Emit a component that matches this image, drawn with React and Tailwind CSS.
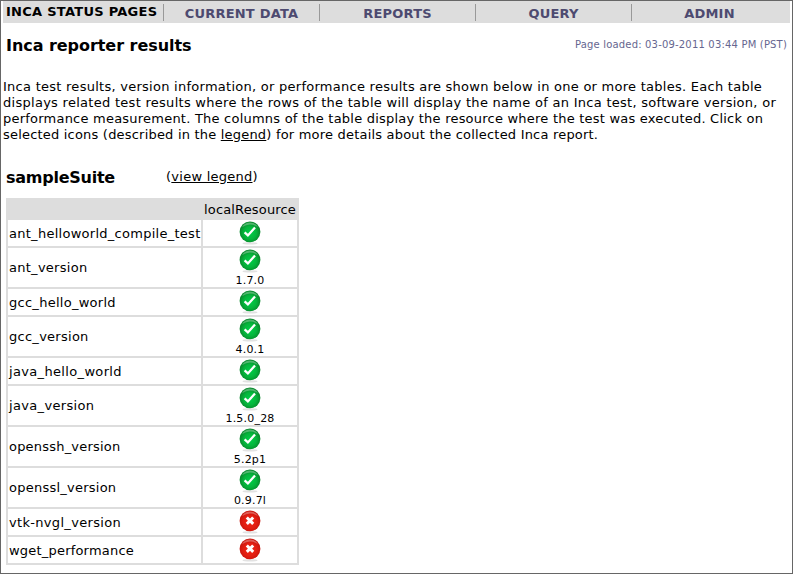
const rows = [
  { name: 'ant_helloworld_compile_test', ok: true, tracking: 'tracking-[0.27px]' },
  { name: 'ant_version', ok: true, version: '1.7.0', tracking: 'tracking-[0.27px]' },
  { name: 'gcc_hello_world', ok: true, tracking: 'tracking-[0.27px]' },
  { name: 'gcc_version', ok: true, version: '4.0.1', tracking: 'tracking-[0.27px]' },
  { name: 'java_hello_world', ok: true, tracking: 'tracking-[0.34px]' },
  { name: 'java_version', ok: true, version: '1.5.0_28', tracking: 'tracking-[0.33px]' },
  { name: 'openssh_version', ok: true, version: '5.2p1', tracking: 'tracking-[0.2px]' },
  { name: 'openssl_version', ok: true, version: '0.9.7l', tracking: 'tracking-[0.24px]' },
  { name: 'vtk-nvgl_version', ok: false, tracking: 'tracking-[0.32px]' },
  { name: 'wget_performance', ok: false, tracking: 'tracking-[0.2px]' },
];

function StatusIcon({ ok }) {
  const id = ok ? 'pass' : 'fail';
  return (
    <svg width="22" height="25" viewBox="0 0 22 25" className="block shrink-0">
      <defs>
        <radialGradient id={id} cx="0.5" cy="0.55" r="0.5">
          <stop offset="0" stopColor={ok ? '#00cf48' : '#ee2516'} />
          <stop offset="0.6" stopColor={ok ? '#05b53c' : '#e41f12'} />
          <stop offset="1" stopColor={ok ? '#078a2c' : '#c9160d'} />
        </radialGradient>
      </defs>
      <ellipse cx="11" cy="23.4" rx="7.5" ry="1.1" fill="#e2e2e2" />
      <circle cx="11" cy="11.8" r="10.4" fill={`url(#${id})`} />
      <path d="M3 7.2A9.2 9.2 0 0 1 19 7.2Q11 2 3 7.2Z" fill="#fff" opacity="0.3" />
      {ok ? (
        <path d="M5.6 12.4L8.9 15.4L16 7.6" fill="none" stroke="#fff" strokeWidth="2.3" />
      ) : (
        <path d="M7.8 8.5L14.2 14.9M14.2 8.5L7.8 14.9" fill="none" stroke="#fff" strokeWidth="3" />
      )}
    </svg>
  );
}

function NavItem({ children }) {
  return (
    <div className="flex h-[17px] w-[156px] justify-center border-l border-[#999] pt-[1px] text-[13px] leading-[17px] font-bold tracking-[0.2px] text-[#4d4a70]">
      {children}
    </div>
  );
}

export default function App() {
  return (
    <div className="h-[574px] w-[793px] overflow-hidden border border-[#666] bg-white font-['Verdana','DejaVu_Sans',sans-serif] text-[13px] whitespace-nowrap text-black">
      <nav className="ml-[2px] flex h-[22px] w-[787px] bg-[#ddd] pt-[3px]">
        <div className="w-[160px] pl-[3px] text-[13px] leading-[15px] font-bold tracking-[0.27px]">INCA STATUS PAGES</div>
        <NavItem>CURRENT DATA</NavItem>
        <NavItem>REPORTS</NavItem>
        <NavItem>QUERY</NavItem>
        <NavItem>ADMIN</NavItem>
      </nav>
      <header className="flex h-[44px] justify-between pr-[5px] pl-[5px]">
        <h1 className="pt-[13px] text-[16px] leading-[20px] font-bold tracking-[-0.05px]">Inca reporter results</h1>
        <div className="pt-[14px] text-[10px] leading-[16px] tracking-[0.18px] text-[#666690]">Page loaded: 03-09-2011 03:44 PM (PST)</div>
      </header>
      <p className="mt-[12px] ml-[2px] leading-[16px]">
        <span className="block tracking-[0.263px]">Inca test results, version information, or performance results are shown below in one or more tables. Each table</span>
        <span className="block tracking-[0.28px]">displays related test results where the rows of the table will display the name of an Inca test, software version, or</span>
        <span className="block tracking-[0.222px]">performance measurement. The columns of the table display the resource where the test was executed. Click on</span>
        <span className="block tracking-[0.2px]">selected icons (described in the <a className="underline">legend</a>) for more details about the collected Inca report.</span>
      </p>
      <div className="mt-[25px] flex h-[30px] pl-[5px]">
        <h2 className="w-[160px] text-[16px] leading-[20px] font-bold tracking-[-0.25px]">sampleSuite</h2>
        <div className="leading-[18px] tracking-[0.25px]">(<a className="underline">view legend</a>)</div>
      </div>
      <div className="ml-[5px] grid w-[293px] grid-cols-[193px_94px] gap-x-[2px] gap-y-[2px] bg-[#ddd] px-[2px] pb-[2px]">
        <div className="h-[20px]" />
        <div className="flex h-[20px] justify-center pt-[3px] leading-[17px] tracking-[0.15px]">localResource</div>
        {rows.map((r) => (
          <div key={r.name} className="contents">
            <div className={`bg-white pl-px leading-[17px] ${r.tracking} ${r.version ? 'h-[39px] pt-[11px]' : 'h-[26px] pt-[5px]'}`}>{r.name}</div>
            <div className="flex flex-col items-center bg-white">
              <StatusIcon ok={r.ok} />
              {r.version && <div className="mt-[1px] h-[13px] text-[11px] leading-[13px] tracking-[0.2px]">{r.version}</div>}
            </div>
          </div>
        ))}
      </div>
    </div>
  );
}
